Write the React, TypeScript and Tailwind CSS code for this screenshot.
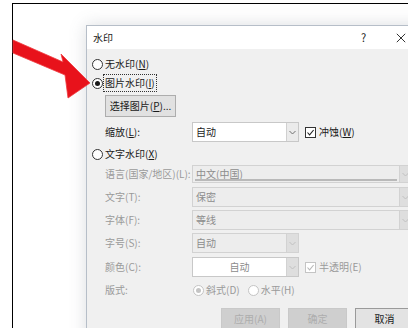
import React from "react";

function Radio({ checked, disabled }: { checked?: boolean; disabled?: boolean }) {
  return (
    <span
      className={`flex h-[11px] w-[11px] shrink-0 items-center justify-center rounded-full border bg-white ${
        disabled ? "border-[#c4c4c4]" : "border-[#333333]"
      }`}
    >
      {checked ? (
        <span
          className={`h-[5px] w-[5px] rounded-full ${disabled ? "bg-[#c4c4c4]" : "bg-[#1a1a1a]"}`}
        />
      ) : null}
    </span>
  );
}

function Check({ disabled }: { disabled?: boolean }) {
  const c = disabled ? "#b8b8b8" : "#222222";
  return (
    <span
      className={`flex h-[11px] w-[11px] shrink-0 items-center justify-center border bg-white ${
        disabled ? "border-[#c4c4c4]" : "border-[#333333]"
      }`}
    >
      <svg width="9" height="9" viewBox="0 0 9 9">
        <polyline points="1.5,4.5 3.6,6.8 7.6,2" fill="none" stroke={c} strokeWidth="1.1" />
      </svg>
    </span>
  );
}

function Chevron({ color }: { color: string }) {
  return (
    <svg width="7" height="5" viewBox="0 0 7 5">
      <polyline points="0.5,1 3.5,4 6.5,1" fill="none" stroke={color} strokeWidth="1" />
    </svg>
  );
}

function Combo({
  value,
  wide,
  disabled,
  center,
  line,
}: {
  value: string;
  wide?: boolean;
  disabled?: boolean;
  center?: boolean;
  line?: boolean;
}) {
  return (
    <div
      className={`flex h-full shrink-0 border ${wide ? "w-[220px]" : "w-[107px]"} ${
        disabled && !center ? "border-[#d2d2d2] bg-[#ededed]" : "border-[#c8c8c8] bg-white"
      }`}
    >
      <div
        className={`relative flex min-w-0 flex-1 items-center ${center ? "justify-center" : "pl-[3px]"} ${
          disabled ? "text-[#8c8c8c]" : "text-[#1a1a1a]"
        }`}
      >
        {value}
        {line ? <div className="absolute bottom-[1px] left-[2px] right-[2px] h-[2px] bg-[#b9b9b9]" /> : null}
      </div>
      <div
        className={`flex w-[12px] shrink-0 items-center justify-center border-l ${
          disabled ? "border-[#d2d2d2] bg-[#dedede]" : "border-[#d0d0d0] bg-[#ebebeb]"
        }`}
      >
        <Chevron color={disabled ? "#c0c0c0" : "#707070"} />
      </div>
    </div>
  );
}

function Label({ children, disabled }: { children: React.ReactNode; disabled?: boolean }) {
  return (
    <div className={`w-[87px] shrink-0 ${disabled ? "text-[#9a9a9a]" : "text-[#1a1a1a]"}`}>{children}</div>
  );
}

function Btn({ children, disabled }: { children: React.ReactNode; disabled?: boolean }) {
  return (
    <div
      className={`flex h-full w-[59px] shrink-0 items-center justify-center border ${
        disabled
          ? "border-[#c9c9c9] bg-[#cfcfcf] text-[#adadad]"
          : "border-[#9a9a9a] bg-[#e3e3e3] text-[#1a1a1a]"
      }`}
    >
      {children}
    </div>
  );
}

function Dialog() {
  return (
    <div className="w-[340px] border border-[#b6bec8] bg-[#f0f0f0] shadow-[0_0_16px_rgba(90,100,115,0.22)]">
      <div className="flex h-[23px] items-center bg-white text-[#1a1a1a]">
        <div className="pl-[6px] text-[10px]">水印</div>
        <div className="ml-[248px] text-[11px]">?</div>
        <div className="ml-[30px]">
          <svg width="10" height="10" viewBox="0 0 10 10">
            <path d="M0.8 0.8 L9.2 9.2 M9.2 0.8 L0.8 9.2" stroke="#333" strokeWidth="1" />
          </svg>
        </div>
      </div>

      <div className="flex h-[300px] flex-col text-[10px] leading-none">
        <div className="mt-[6px] flex h-[18px] items-center pl-[5px] text-[#1a1a1a]">
          <Radio />
          <span className="ml-[2px]">
            无水印(<span className="underline underline-offset-1">N</span>)
          </span>
        </div>

        <div className="mt-[1px] flex h-[18px] items-center pl-[5px] text-[#1a1a1a]">
          <Radio checked />
          <span className="flex h-[18px] items-center border border-dotted border-[#333] px-[1px]">
            图片水印(<span className="underline underline-offset-1">I</span>)
          </span>
        </div>

        <div className="mt-[3px] flex h-[22px] pl-[18px]">
          <div className="flex h-full w-[71px] items-center justify-center border border-[#adadad] bg-[#e1e1e1] text-[#1a1a1a]">
            选择图片(<span className="underline underline-offset-1">P</span>)...
          </div>
        </div>

        <div className="mt-[5px] flex h-[20px] items-center pl-[18px]">
          <Label>
            缩放(<span className="underline underline-offset-1">L</span>):
          </Label>
          <Combo value="自动" />
          <div className="ml-[6px]">
            <Check />
          </div>
          <span className="ml-[3px] text-[#1a1a1a]">
            冲蚀(<span className="underline underline-offset-1">W</span>)
          </span>
        </div>

        <div className="mt-[3px] flex h-[18px] items-center pl-[5px] text-[#1a1a1a]">
          <Radio />
          <span className="ml-[2px]">
            文字水印(<span className="underline underline-offset-1">X</span>)
          </span>
        </div>

        <div className="mt-[2px] flex h-[18px] items-center pl-[18px]">
          <Label disabled>语言(国家/地区)(L):</Label>
          <Combo value="中文(中国)" wide disabled line />
        </div>

        <div className="mt-[4px] flex h-[20px] items-center pl-[18px]">
          <Label disabled>文字(T):</Label>
          <Combo value="保密" wide disabled />
        </div>

        <div className="mt-[3px] flex h-[20px] items-center pl-[18px]">
          <Label disabled>字体(F):</Label>
          <Combo value="等线" wide disabled />
        </div>

        <div className="mt-[3px] flex h-[20px] items-center pl-[18px]">
          <Label disabled>字号(S):</Label>
          <Combo value="自动" disabled />
        </div>

        <div className="mt-[4px] flex h-[20px] items-center pl-[18px]">
          <Label disabled>颜色(C):</Label>
          <Combo value="自动" disabled center />
          <div className="ml-[6px]">
            <Check disabled />
          </div>
          <span className="ml-[3px] text-[#9a9a9a]">半透明(E)</span>
        </div>

        <div className="mt-[4px] flex h-[18px] items-center pl-[18px] text-[#9a9a9a]">
          <Label disabled>版式:</Label>
          <div className="ml-[1px] flex items-center">
            <Radio checked disabled />
            <span className="ml-[2px]">斜式(D)</span>
          </div>
          <div className="ml-[8px] flex items-center">
            <Radio disabled />
            <span className="ml-[2px]">水平(H)</span>
          </div>
        </div>

        <div className="mt-[9px] flex h-[22px] gap-[8px] pl-[134px]">
          <Btn disabled>应用(A)</Btn>
          <Btn disabled>确定</Btn>
          <Btn>取消</Btn>
        </div>
      </div>
    </div>
  );
}

function RedArrow() {
  return (
    <svg className="pointer-events-none absolute left-0 top-0" width="408" height="328" viewBox="0 0 408 328">
      <polygon
        points="13,40 63,62 61,54 90,83 68,98 65,75 13,53"
        fill="#e8121b"
        stroke="#ef3a3f"
        strokeWidth="0.8"
        strokeLinejoin="round"
      />
    </svg>
  );
}

export default function App() {
  return (
    <div className="relative h-[328px] w-[408px] overflow-hidden bg-white pl-[12px] pt-[3px] font-['Noto_Sans_CJK_SC','Noto_Sans',sans-serif]">
      <div className="h-full border-l border-t border-black pl-[73px] pt-[21px]">
        <Dialog />
      </div>
      <RedArrow />
    </div>
  );
}
